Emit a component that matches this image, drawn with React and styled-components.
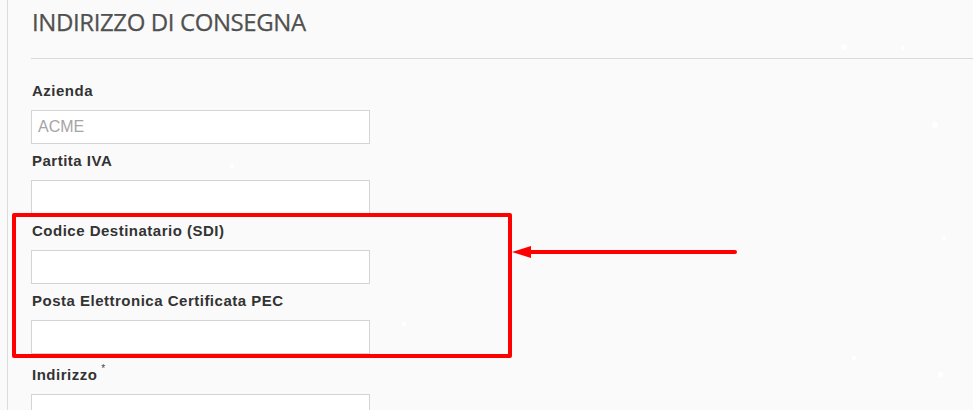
import React from 'react';
import styled, { createGlobalStyle } from 'styled-components';

const GlobalStyle = createGlobalStyle`
  html, body {
    margin: 0;
    padding: 0;
    background: #fafafa;
  }
  body {
    overflow: hidden;
  }
`;

const StyledPage = styled.div`
  position: relative;
  width: 973px;
  height: 410px;
  overflow: hidden;
  padding-left: 7px;
  box-sizing: border-box;
  background: #fafafa;
`;

const StyledPanel = styled.div`
  height: 100%;
  border-left: 1px solid #dcdcdc;
  padding-left: 23px;
`;

const StyledTitle = styled.h2`
  margin: 0;
  padding: 4px 0 0 1px;
  font-family: 'Open Sans', sans-serif;
  font-size: 24px;
  font-weight: 400;
  letter-spacing: -0.4px;
  line-height: 36px;
  color: #505050;
  -webkit-text-stroke: 0.25px #505050;
`;

const StyledRule = styled.div`
  margin-top: 18px;
  height: 1px;
  background: #dadada;
`;

const StyledForm = styled.form`
  padding-top: 22px;
`;

const StyledGroup = styled.div`
  display: flex;
  flex-direction: column;
  margin-bottom: 7px;
`;

const StyledLabel = styled.label`
  font-family: 'Liberation Sans', Arial, sans-serif;
  font-size: 15px;
  font-weight: 700;
  letter-spacing: 0.5px;
  line-height: 20px;
  color: #333;
  margin: 0 0 9px 1px;
`;

const StyledRequired = styled.sup`
  font-weight: 400;
  font-size: 10px;
  margin-left: 4px;
  color: #444;
  position: relative;
  top: -2px;
`;

const StyledInput = styled.input`
  box-sizing: border-box;
  width: 339px;
  height: 34px;
  padding: 0 6px;
  border: 1px solid #d4d4d4;
  border-radius: 0;
  background: #fff;
  font-family: 'Liberation Sans', Arial, sans-serif;
  font-size: 16px;
  color: #555;
  outline: none;
  &::placeholder {
    color: #a5a5a5;
  }
`;

const StyledHighlight = styled.div`
  position: absolute;
  left: 12px;
  top: 213px;
  width: 500px;
  height: 145px;
  box-sizing: border-box;
  border: 4px solid #ff0000;
  border-radius: 2px;
  pointer-events: none;
`;

const StyledArrow = styled.svg`
  position: absolute;
  left: 510px;
  top: 240px;
  pointer-events: none;
`;

const StyledSpark = styled.span`
  position: absolute;
  width: ${p => p.$size}px;
  height: ${p => p.$size}px;
  border-radius: 50%;
  background: #fff;
`;

const fields = [
  { label: 'Azienda', placeholder: 'ACME' },
  { label: 'Partita IVA' },
  { label: 'Codice Destinatario (SDI)' },
  { label: 'Posta Elettronica Certificata PEC' },
  { label: 'Indirizzo', required: true },
];

const sparks = [
  [841, 44, 6],
  [901, 46, 4],
  [932, 122, 6],
  [230, 164, 4],
  [402, 322, 4],
  [852, 356, 4],
  [938, 372, 5],
  [942, 236, 4],
];

export default function App() {
  return (
    <StyledPage>
      <GlobalStyle />
      {sparks.map(([x, y, s], i) => (
        <StyledSpark key={i} $size={s} style={{ left: x, top: y }} />
      ))}
      <StyledPanel>
        <StyledTitle>INDIRIZZO DI CONSEGNA</StyledTitle>
        <StyledRule />
        <StyledForm onSubmit={e => e.preventDefault()}>
          {fields.map(f => (
            <StyledGroup key={f.label}>
              <StyledLabel>
                {f.label}
                {f.required && <StyledRequired>*</StyledRequired>}
              </StyledLabel>
              <StyledInput type="text" placeholder={f.placeholder || ''} />
            </StyledGroup>
          ))}
        </StyledForm>
      </StyledPanel>
      <StyledHighlight />
      <StyledArrow width="232" height="24" viewBox="0 0 232 24">
        <line x1="20" y1="12" x2="225" y2="12" stroke="#ff0000" strokeWidth="4" strokeLinecap="round" />
        <polygon points="2,12 21,6 21,18" fill="#ff0000" />
      </StyledArrow>
    </StyledPage>
  );
}
